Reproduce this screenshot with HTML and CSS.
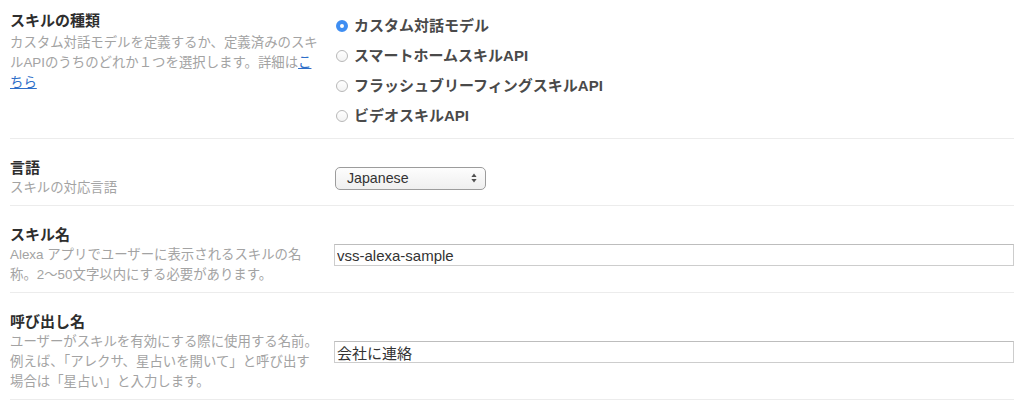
FILE: index.html
```html
<!DOCTYPE html>
<html lang="ja">
<head>
<meta charset="utf-8">
<title>スキル情報</title>
<link rel="stylesheet" href="styles.css">
</head>
<body>
<div class="form">
  <div class="row row--top">
    <div class="label label--top">
      <div class="title">スキルの種類</div>
      <div class="desc desc--top">カスタム対話モデルを定義するか、定義済みのスキルAPIのうちのどれか１つを選択します。詳細は<a href="#" class="link">こちら</a></div>
    </div>
    <div class="field">
      <div class="radios">
        <label class="radio-item"><input type="radio" name="type" class="radio" checked><span class="radio-label">カスタム対話モデル</span></label>
        <label class="radio-item"><input type="radio" name="type" class="radio"><span class="radio-label">スマートホームスキルAPI</span></label>
        <label class="radio-item"><input type="radio" name="type" class="radio"><span class="radio-label">フラッシュブリーフィングスキルAPI</span></label>
        <label class="radio-item"><input type="radio" name="type" class="radio"><span class="radio-label">ビデオスキルAPI</span></label>
      </div>
    </div>
  </div>

  <div class="row">
    <div class="label">
      <div class="title">言語</div>
      <div class="desc">スキルの対応言語</div>
    </div>
    <div class="field">
      <div class="select">
        <span class="select-text">Japanese</span>
        <svg class="select-arrows" width="8" height="12" viewBox="0 0 8 12"><path d="M4 1.5 L6.6 5 L1.4 5 Z" fill="#505050"/><path d="M1.4 7 L6.6 7 L4 10.5 Z" fill="#505050"/></svg>
      </div>
    </div>
  </div>

  <div class="row">
    <div class="label">
      <div class="title">スキル名</div>
      <div class="desc">Alexa アプリでユーザーに表示されるスキルの名称。2〜50文字以内にする必要があります。</div>
    </div>
    <div class="field">
      <input class="text-input" type="text" value="vss-alexa-sample">
    </div>
  </div>

  <div class="row">
    <div class="label">
      <div class="title">呼び出し名</div>
      <div class="desc">ユーザーがスキルを有効にする際に使用する名前。例えば、「アレクサ、星占いを開いて」と呼び出す場合は「星占い」と入力します。</div>
    </div>
    <div class="field">
      <input class="text-input" type="text" value="会社に連絡">
    </div>
  </div>
</div>
</body>
</html>
```

FILE: styles.css
```css
html, body {
  margin: 0;
  padding: 0;
  background: #ffffff;
}

body {
  font-family: "Liberation Sans", "Noto Sans CJK JP", sans-serif;
  color: #333333;
}

.form {
  padding: 0 10px;
}

.row {
  display: flex;
  align-items: center;
  padding: 19px 0 7px;
  border-bottom: 1px solid #ececec;
}

.row--top {
  align-items: flex-start;
  padding-top: 9px;
  padding-bottom: 9px;
}

.label {
  flex: none;
  width: 312px;
  margin-right: 12px;
}

.label--top {
  margin-top: 2px;
}

.title {
  font-size: 15px;
  line-height: 20px;
  font-weight: bold;
  color: #2e2e2e;
}

.desc {
  font-size: 13.4px;
  line-height: 20px;
  color: #a3a3a3;
}

.desc--top {
  margin-top: 2px;
}

.link {
  color: #2f6fc9;
  text-decoration: underline;
}

.field {
  flex: 1;
  min-width: 0;
}

.radios {
  display: flex;
  flex-direction: column;
}

.radio-item {
  display: flex;
  align-items: center;
  height: 30px;
}

.radio {
  appearance: none;
  -webkit-appearance: none;
  box-sizing: border-box;
  width: 12px;
  height: 12px;
  margin: 3px 6px 0 2px;
  border: 1px solid #b8b8b8;
  border-radius: 50%;
  background: linear-gradient(#ffffff, #f3f3f3);
  flex: none;
}

.radio:checked {
  border: 4px solid #3f8ef2;
  background: #ffffff;
}

.radio-label {
  font-size: 15px;
  font-weight: bold;
  color: #4a4a4a;
}

.select {
  display: flex;
  align-items: center;
  justify-content: space-between;
  box-sizing: border-box;
  width: 151px;
  height: 23px;
  margin-left: 1px;
  padding: 0 7px 0 11px;
  border: 1px solid #9c9c9c;
  border-radius: 5px;
  background: linear-gradient(#fdfdfd, #efefef);
}

.select-text {
  font-size: 14.2px;
  color: #333333;
}

.select-arrows {
  display: block;
}

.text-input {
  display: block;
  box-sizing: border-box;
  width: 100%;
  height: 22px;
  margin: 0;
  padding: 0 2px;
  font-family: "Liberation Sans", "Noto Sans CJK JP", sans-serif;
  font-size: 15px;
  color: #333333;
  background: #ffffff;
  border: 1px solid #cdcdcd;
  border-top-color: #bdbdbd;
  border-radius: 0;
  outline: none;
}
```
